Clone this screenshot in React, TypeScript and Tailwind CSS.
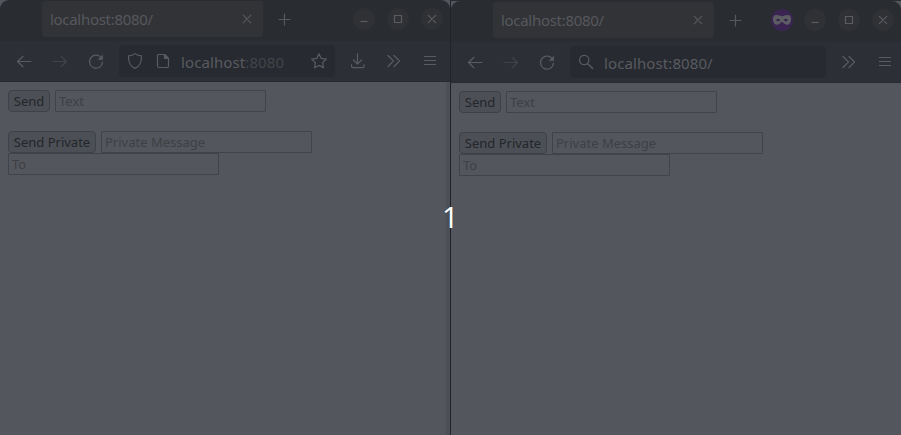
import type { ReactNode } from 'react';

function Icon({ children, className = '' }: { children: ReactNode; className?: string }) {
  return (
    <svg
      viewBox="0 0 16 16"
      className={`block h-4 w-4 shrink-0 overflow-visible ${className}`}
      fill="none"
      stroke="currentColor"
      strokeWidth="1.2"
      strokeLinecap="round"
      strokeLinejoin="round"
    >
      {children}
    </svg>
  );
}

function Cell({ children, className = 'w-9' }: { children: ReactNode; className?: string }) {
  return <div className={`flex h-8 shrink-0 items-center justify-center ${className}`}>{children}</div>;
}

function WindowButton({ children }: { children: ReactNode }) {
  return (
    <div className="flex h-[22px] w-[22px] shrink-0 items-center justify-center rounded-full bg-[#303135] text-[#595b60]">
      {children}
    </div>
  );
}

function TabBar({ isPrivate }: { isPrivate: boolean }) {
  return (
    <div className="flex h-[41px] shrink-0 items-start rounded-t-[9px] bg-[#292c30] pl-[42px] text-[#56585d]">
      <div className="mt-px flex h-9 w-[221px] shrink-0 items-center rounded-[3px] bg-[#323337] pl-2">
        <span className="w-[189px] whitespace-nowrap text-[15px] leading-5 tracking-[-0.3px]">localhost:8080/</span>
        <Icon>
          <path d="M4.2 4.2l7.6 7.6M11.8 4.2l-7.6 7.6" />
        </Icon>
      </div>
      <div className="ml-[13px] mt-[11px]">
        <Icon>
          <path d="M8.5 3v11M3 8.5h11" />
        </Icon>
      </div>
      <div className="ml-auto mr-[7px] mt-2 flex gap-3">
        {isPrivate && (
          <div className="-mr-px flex h-[22px] w-[22px] items-center justify-center rounded-full bg-[#3a2552]">
            <svg viewBox="0 0 18 10" className="block h-[10px] w-[18px]" fill="#5c5e64">
              <path
                fillRule="evenodd"
                d="M3.5 0C5.9 0 7.2 1.2 9 1.2S12.1 0 14.5 0C17 0 18 1.3 18 4c0 3.6-1.8 5.8-4.2 5.8C11.5 9.8 10.6 7 9 7S6.500 9.800 4.200 9.800C1.800 9.800 0 7.600 0 4 0 1.300 1 0 3.500 0ZM3 4.900C4 6.600 6.400 6.600 7.200 4.900 6.200 3.200 4 3.200 3 4.900ZM10.800 4.900C11.600 6.600 14 6.600 15 4.900 14 3.200 11.800 3.200 10.800 4.900Z"
              />
            </svg>
          </div>
        )}
        <WindowButton>
          <Icon><path d="M4.500 10.500h7" strokeLinecap="butt" /></Icon>
        </WindowButton>
        <WindowButton>
          <Icon><path d="M4.500 4.500h7v7h-7z" strokeLinejoin="miter" /></Icon>
        </WindowButton>
        <WindowButton>
          <Icon><path d="M4.300 4.300l7.400 7.400M11.700 4.300l-7.400 7.400" /></Icon>
        </WindowButton>
      </div>
    </div>
  );
}

function NavBar({ isPrivate }: { isPrivate: boolean }) {
  return (
    <div className="flex h-[41px] shrink-0 border-b border-[#292b30] bg-[#2d2f36] pl-[6px] pt-1 text-[#595b60]">
      <Cell>
        <Icon><path d="M1.500 8.500h13.500M7 3.300L1.500 8.500 7 13.700" /></Icon>
      </Cell>
      <Cell className="w-9 text-[#424347]">
        <Icon><path d="M1 8.500h13.500M9 3.300L14.500 8.500 9 13.700" /></Icon>
      </Cell>
      <Cell>
        <Icon>
          <path d="M13.800 5.700A6.500 6.500 0 1 0 14.500 9" />
          <path d="M14.800 2v4.700h-4.700z" fill="currentColor" strokeWidth=".3" />
        </Icon>
      </Cell>
      {isPrivate ? (
        <div className="ml-[5px] flex h-8 w-64 shrink-0 items-center rounded-[4px] bg-[#272a30] pl-2">
          <Icon>
            <circle cx="6.200" cy="6" r="4.700" />
            <path d="M9.700 9.700l5 4.800" strokeWidth="1.400" />
          </Icon>
          <span className="ml-[10px] whitespace-nowrap pt-px text-[15px] leading-5 tracking-[0.1px]">localhost:8080/</span>
        </div>
      ) : (
        <div className="ml-[5px] flex h-8 w-[216px] shrink-0 items-center rounded-[4px] bg-[#272a30] pl-2">
          <Icon>
            <path d="M8 .6c2 1.600 4.200 2.100 6.500 2.300C14.800 9 12.500 13.500 8 15.400 3.500 13.500 1.200 9 1.500 2.900 3.800 2.700 6 2.200 8 .6Z" />
          </Icon>
          <Icon className="ml-3">
            <path d="M3.500 1.500h6l4 4v7.500a1.500 1.500 0 0 1-1.500 1.500H4A1.500 1.500 0 0 1 2.500 13V2.500a1 1 0 0 1 1-1Z" />
            <path d="M9.500 1.500v4h4z" fill="currentColor" />
          </Icon>
          <span className="ml-[10px] w-[130px] whitespace-nowrap pt-px text-[15px] leading-5 tracking-[0.1px]">
            localhost<span className="text-[#434448]">:8080</span>
          </span>
          <Icon>
            <path d="M8 .7l2.200 4.700 5.100.7-3.700 3.600.9 5.100L8 12.400l-4.500 2.400.9-5.100L.7 6.100l5.100-.7z" />
          </Icon>
        </div>
      )}
      <div className="ml-auto flex">
        {!isPrivate && (
          <Cell>
            <Icon>
              <path d="M7.500.5v10.500M3.500 7l4 4 4-4M1.500 11.500v1.700a1.500 1.500 0 0 0 1.500 1.500h9.500a1.500 1.500 0 0 0 1.500-1.500v-1.700" />
            </Icon>
          </Cell>
        )}
        <Cell>
          <Icon><path d="M2 2.500l5.500 5.500L2 13.500M8 2.500l5.500 5.500L8 13.500" /></Icon>
        </Cell>
        <Cell className={isPrivate ? 'mr-[-2px] w-9' : 'mr-[2px] w-9'}>
          <Icon><path d="M2 3.500h12M2 7.500h12M2 11.500h12" strokeWidth="1" strokeLinecap="butt" /></Icon>
        </Cell>
      </div>
    </div>
  );
}

function Button({ label, className }: { label: string; className: string }) {
  return (
    <button
      className={`flex h-[22px] shrink-0 items-center justify-center whitespace-nowrap rounded-[4px] border border-[#3e4147] bg-[#4c4f55] text-[13px] leading-4 text-[#23262b] ${className}`}
    >
      {label}
    </button>
  );
}

function Field({ placeholder }: { placeholder: string }) {
  return (
    <input
      className="block h-[22px] w-[211px] shrink-0 rounded-[1px] border border-[#404347] bg-transparent px-[3px] text-[13px] leading-4 outline-none placeholder:text-[#3e4044] placeholder:opacity-100"
      placeholder={placeholder}
    />
  );
}

function BrowserWindow({ isPrivate = false }: { isPrivate?: boolean }) {
  return (
    <section className="flex w-[450px] shrink-0 flex-col">
      <TabBar isPrivate={isPrivate} />
      <NavBar isPrivate={isPrivate} />
      <main className="flex flex-1 flex-col bg-[#53565d] pl-2 pt-2">
        <div className="flex gap-[5px]">
          <Button label="Send" className="w-[42px]" />
          <Field placeholder="Text" />
        </div>
        <div className="mt-[19px] flex gap-[5px]">
          <Button label="Send Private" className="w-[88px]" />
          <Field placeholder="Private Message" />
        </div>
        <Field placeholder="To" />
      </main>
    </section>
  );
}

export default function App() {
  return (
    <div className="relative flex h-[435px] w-[901px] overflow-hidden bg-[#53565d] font-['Noto_Sans',sans-serif]">
      <BrowserWindow />
      <div className="w-px shrink-0 bg-[#202328]" />
      <div className="flex bg-[linear-gradient(#292c30_0_1px,transparent_1px)] pt-px">
        <BrowserWindow isPrivate />
      </div>
      <div className="absolute bottom-0 left-[446px] top-[82px] w-1 bg-[#4c4f55]" />
      <div className="absolute left-[442px] top-[197px] font-['Open_Sans',sans-serif] text-[29px] leading-10 text-white">1</div>
    </div>
  );
}
